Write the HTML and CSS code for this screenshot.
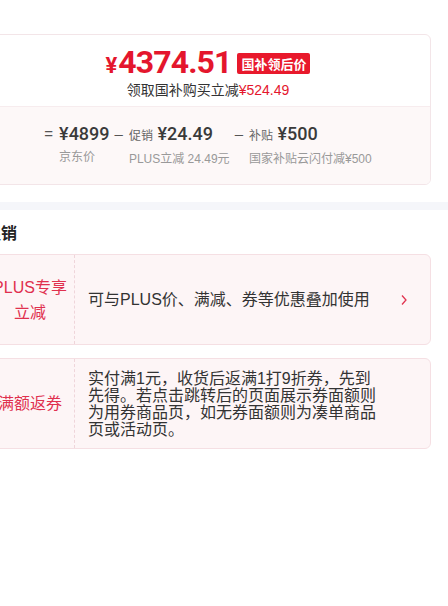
FILE: index.html
```html
<!DOCTYPE html>
<html lang="zh-CN">
<head>
  <meta charset="UTF-8">
  <title>价格说明</title>
  <link rel="stylesheet" href="styles.css">
</head>
<body>

<div class="sheet">
  <div class="sheet-title">价格</div>

  <div class="price-card">
    <div class="price-top">
      <div class="price-line">
        <span class="yen">¥</span><span class="big">4374.51</span>
        <span class="badge">国补领后价</span>
      </div>
      <div class="price-sub">领取国补购买立减<span class="red">¥524.49</span></div>
    </div>

    <div class="price-detail">
      <div class="calc">
        <span class="op">=</span>
        <div class="calc-col">
          <div class="calc-val">¥4899</div>
          <div class="calc-label">京东价</div>
        </div>
      </div>
      <div class="calc">
        <span class="op">–</span>
        <div class="calc-col">
          <div class="calc-val"><small>促销</small> ¥24.49</div>
          <div class="calc-label">PLUS立减 24.49元</div>
        </div>
      </div>
      <div class="calc">
        <span class="op">–</span>
        <div class="calc-col">
          <div class="calc-val"><small>补贴</small> ¥500</div>
          <div class="calc-label">国家补贴云闪付减¥500</div>
        </div>
      </div>
    </div>
  </div>
</div>

<div class="band"></div>

<div class="sheet">
  <h3 class="section-title">促销</h3>

  <div class="promo">
    <div class="promo-tag">PLUS专享<br>立减</div>
    <div class="promo-desc">
      <span class="promo-text">可与PLUS价、满减、券等优惠叠加使用</span>
      <svg class="arrow" width="8" height="12" viewBox="0 0 8 12">
        <polyline points="2,1.5 6,6 2,10.5" fill="none" stroke="#e0334f" stroke-width="1.3"/>
      </svg>
    </div>
  </div>

  <div class="promo">
    <div class="promo-tag">满额返券</div>
    <div class="promo-desc">
      <span class="promo-text">实付满1元，收货后返满1打9折券，先到先得。若点击跳转后的页面展示券面额则为用券商品页，如无券面额则为凑单商品页或活动页。</span>
    </div>
  </div>
</div>

</body>
</html>
```

FILE: styles.css
```css
body {
  margin: 0;
  background: #fff;
  font-family: "Liberation Sans", "Noto Sans CJK SC", sans-serif;
  color: #333;
  overflow: hidden;
}
.sheet {
  margin-left: -15px;
  width: 446px;
}
.sheet-title {
  margin-top: -18px;
  height: 22px;
  line-height: 22px;
  text-align: center;
  font-size: 16px;
  color: #888;
}
.price-card {
  margin-top: 30px;
  border: 1px solid #f3e5e8;
  border-radius: 6px;
  overflow: hidden;
}
.price-top {
  padding: 9px 0 6px;
  text-align: center;
  border-bottom: 1px solid #f7ecee;
}
.price-line {
  height: 36px;
  line-height: 36px;
  color: #e4162d;
  font-family: Roboto, "Liberation Sans", sans-serif;
  font-weight: bold;
}
.yen {
  font-size: 22px;
  margin-right: 1px;
}
.big {
  font-size: 32px;
  letter-spacing: -0.9px;
}
.badge {
  display: inline-block;
  vertical-align: 4px;
  margin-left: 2px;
  padding: 0 4px;
  height: 21px;
  line-height: 21px;
  background: #e8192c;
  color: #fff;
  font-size: 13px;
  font-family: "Noto Sans CJK SC", sans-serif;
  border-radius: 2px;
}
.price-sub {
  line-height: 20px;
  font-size: 14px;
  color: #333;
}
.red {
  color: #e4162d;
}
.price-detail {
  background: #fdf8f8;
  padding: 15px 0 16px;
  display: flex;
  justify-content: center;
  gap: 5px;
}
.calc {
  display: flex;
  align-items: flex-start;
}
.op {
  line-height: 24px;
  font-size: 15px;
  color: #555;
  margin-right: 6px;
}
.calc-val {
  line-height: 24px;
  font-size: 18px;
  font-family: Roboto, "Liberation Sans", "Noto Sans CJK SC", sans-serif;
  font-weight: 500;
  color: #3a3a3a;
}
.calc-val small {
  font-size: 12px;
  font-weight: normal;
  color: #666;
}
.calc-label {
  margin-top: 2px;
  line-height: 18px;
  font-size: 12px;
  color: #999;
}
.band {
  margin-top: 17px;
  height: 8px;
  background: #f5f6fa;
}
.section-title {
  margin: 13px 0 9px;
  line-height: 22px;
  font-size: 16px;
  font-weight: bold;
  color: #222;
}
.promo {
  display: flex;
  box-sizing: border-box;
  min-height: 91px;
  margin-bottom: 13px;
  background: #fdf5f6;
  border: 1px solid #f5dfe3;
  border-radius: 6px;
}
.promo-tag {
  width: 88px;
  flex-shrink: 0;
  display: flex;
  align-items: center;
  justify-content: center;
  text-align: center;
  font-size: 16px;
  line-height: 25px;
  color: #e0304e;
  border-right: 1px dashed #efd5da;
}
.promo-desc {
  flex: 1;
  display: flex;
  align-items: center;
  padding: 10px 16px 10px 13px;
  font-size: 16px;
  line-height: 17px;
  color: #333;
}
.promo-text {
  max-width: 292px;
  flex: 1;
}
.arrow {
  display: block;
  margin-left: 20px;
}
```
